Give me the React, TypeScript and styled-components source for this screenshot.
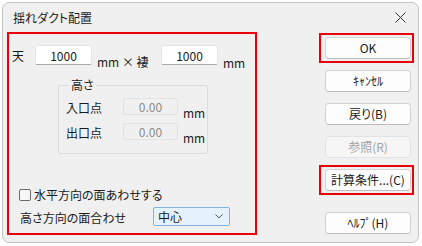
import React from 'react';
import styled, { createGlobalStyle } from 'styled-components';

const GlobalStyle = createGlobalStyle`
  body {
    margin: 0;
    background: #ffffff;
    font-family: "Noto Sans CJK JP", "Noto Sans", sans-serif;
    font-feature-settings: "palt";
    color: #1a1a1a;
  }
`;

const Window = styled.div`
  box-sizing: border-box;
  margin: 2px 0 0 2px;
  width: 417px;
  height: 241px;
  border: 1px solid #c4c4c4;
  border-radius: 7px;
  background: #f0f0f0;
  display: flex;
  flex-direction: column;
  overflow: hidden;
`;

const TitleBar = styled.div`
  height: 29px;
  display: flex;
  align-items: center;
  justify-content: space-between;
  padding: 0 8px 0 10px;
  font-size: 12px;
  line-height: 14px;
  color: #202020;
`;

const CloseButton = styled.div`
  width: 14px;
  height: 14px;
  display: flex;
  align-items: center;
  justify-content: center;
  margin-right: 3px;
`;

const Body = styled.div`
  flex: 1;
  display: flex;
  padding: 0 0 0 4px;
  font-size: 12px;
  line-height: 14px;
`;

const LeftPanel = styled.div`
  box-sizing: border-box;
  width: 250px;
  height: 203px;
  border: 2px solid #e8000b;
  padding: 11px 0 7px 3px;
  display: flex;
  flex-direction: column;
`;

const DimRow = styled.div`
  display: flex;
  align-items: center;
  height: 20px;
`;

const RowLabel = styled.span<{ $width: number }>`
  width: ${(p) => p.$width}px;
  flex-shrink: 0;
  padding-top: 2px;
`;

const TextInput = styled.input<{ $width: number; $height: number }>`
  box-sizing: border-box;
  width: ${(p) => p.$width}px;
  height: ${(p) => p.$height}px;
  margin: 0;
  padding: 0;
  border: 1px solid #e6e6e6;
  border-bottom-color: #a8a8a8;
  border-radius: 2px;
  background: #ffffff;
  font: inherit;
  font-size: 12px;
  color: #1a1a1a;
  text-align: center;
  outline: none;

  &:disabled {
    background: #f0f0f0;
    border-color: #e2e2e2;
    color: #8c8c8c;
  }
`;

const Unit = styled.span<{ $width?: number; $drop: number }>`
  align-self: flex-end;
  margin-left: 5px;
  margin-bottom: -${(p) => p.$drop}px;
  width: ${(p) => (p.$width ? `${p.$width}px` : 'auto')};
  flex-shrink: 0;
`;

const HeightGroup = styled.fieldset`
  box-sizing: border-box;
  width: 150px;
  margin: 13px 0 0 46px;
  padding: 6px 0 13px 7px;
  border: 1px solid #dcdcdc;
  border-radius: 2px;
  display: flex;
  flex-direction: column;
  gap: 8px;
`;

const GroupLegend = styled.legend`
  padding: 0 2px;
  margin-left: 3px;
  font-size: 12px;
  line-height: 14px;
`;

const PointRow = styled.div`
  display: flex;
  align-items: center;
  height: 17px;
`;

const Bottom = styled.div`
  margin-top: auto;
  display: flex;
  flex-direction: column;
  gap: 5px;
`;

const CheckRow = styled.label`
  display: flex;
  align-items: center;
  gap: 3px;
  margin-left: 7px;
  height: 14px;
`;

const CheckBox = styled.span`
  box-sizing: border-box;
  width: 12px;
  height: 12px;
  border: 1px solid #6b6b6b;
  border-radius: 2px;
  background: #f7f7f7;
`;

const SelectRow = styled.div`
  display: flex;
  align-items: center;
  margin-left: 8px;
  height: 19px;
`;

const Select = styled.div`
  box-sizing: border-box;
  width: 77px;
  height: 19px;
  border: 1px solid #7fb4e0;
  border-radius: 2px;
  background: #e5f1fb;
  display: flex;
  align-items: center;
  justify-content: space-between;
  padding: 0 6px 0 4px;
`;

const ButtonColumn = styled.div`
  margin-left: 62px;
  margin-top: 1px;
  display: flex;
  flex-direction: column;
  gap: 3px;
`;

const Slot = styled.div<{ $marked?: boolean; $push?: number }>`
  box-sizing: border-box;
  height: 30px;
  width: 95px;
  padding: 2px 1px 2px 4px;
  border: 2px solid ${(p) => (p.$marked ? '#e8000b' : 'transparent')};
  margin-top: ${(p) => p.$push ?? 0}px;
`;

const Button = styled.button`
  box-sizing: border-box;
  width: 86px;
  height: 22px;
  margin: 0;
  padding: 0;
  border: 1px solid #d2d2d2;
  border-bottom-color: #bdbdbd;
  border-radius: 4px;
  background: #fdfdfd;
  font: inherit;
  font-size: 12px;
  line-height: 14px;
  color: #1a1a1a;

  &:disabled {
    background: #f6f6f6;
    border-color: #e3e3e3;
    color: #a3a3a3;
  }
`;

export default function App() {
  return (
    <>
      <GlobalStyle />
      <Window>
        <TitleBar>
          <span>揺れダクト配置</span>
          <CloseButton>
            <svg width="11" height="11" viewBox="0 0 11 11">
              <path d="M0.5 0.5 L10.5 10.5 M10.5 0.5 L0.5 10.5" stroke="#333" strokeWidth="1" fill="none" />
            </svg>
          </CloseButton>
        </TitleBar>
        <Body>
          <LeftPanel>
            <DimRow>
              <RowLabel $width={23}>天</RowLabel>
              <TextInput $width={57} $height={20} defaultValue="1000" readOnly />
              <Unit $width={64} $drop={4}>mm × 褄</Unit>
              <TextInput $width={57} $height={20} defaultValue="1000" readOnly />
              <Unit $drop={5}>mm</Unit>
            </DimRow>
            <HeightGroup>
              <GroupLegend>高さ</GroupLegend>
              <PointRow>
                <RowLabel $width={57}>入口点</RowLabel>
                <TextInput $width={55} $height={17} defaultValue="0.00" disabled />
                <Unit $drop={5}>mm</Unit>
              </PointRow>
              <PointRow>
                <RowLabel $width={57}>出口点</RowLabel>
                <TextInput $width={55} $height={17} defaultValue="0.00" disabled />
                <Unit $drop={5}>mm</Unit>
              </PointRow>
            </HeightGroup>
            <Bottom>
              <CheckRow>
                <CheckBox />
                <span>水平方向の面あわせする</span>
              </CheckRow>
              <SelectRow>
                <RowLabel $width={133}>高さ方向の面合わせ</RowLabel>
                <Select>
                  <span>中心</span>
                  <svg width="8" height="5" viewBox="0 0 8 5">
                    <path d="M0.5 0.5 L4 4 L7.5 0.5" stroke="#555" strokeWidth="1" fill="none" />
                  </svg>
                </Select>
              </SelectRow>
            </Bottom>
          </LeftPanel>
          <ButtonColumn>
            <Slot $marked>
              <Button>OK</Button>
            </Slot>
            <Slot>
              <Button>ｷｬﾝｾﾙ</Button>
            </Slot>
            <Slot>
              <Button>戻り(B)</Button>
            </Slot>
            <Slot>
              <Button disabled>参照(R)</Button>
            </Slot>
            <Slot $marked>
              <Button>計算条件...(C)</Button>
            </Slot>
            <Slot $push={10}>
              <Button>ﾍﾙﾌﾟ(H)</Button>
            </Slot>
          </ButtonColumn>
        </Body>
      </Window>
    </>
  );
}
